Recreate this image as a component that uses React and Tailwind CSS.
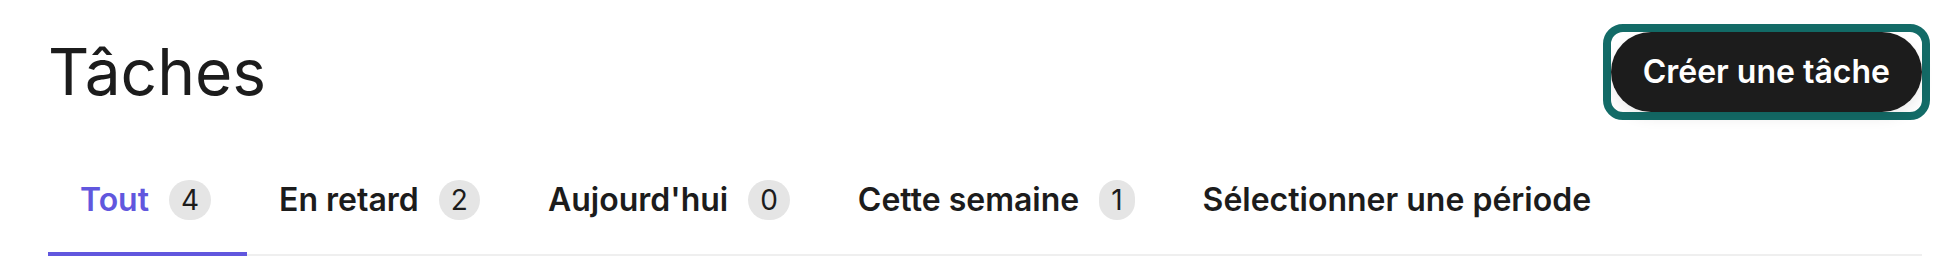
import { useState } from "react"

const tabs = [
  { label: "Tout", count: 4 },
  { label: "En retard", count: 2 },
  { label: "Aujourd'hui", count: 0 },
  { label: "Cette semaine", count: 1 },
  { label: "Sélectionner une période" },
]

export default function App() {
  const [active, setActive] = useState("Tout")

  return (
    <div
      className="min-h-[280px] bg-white pl-12 pr-[38px] pt-6 text-[#1c1c1c]"
      style={{ fontFamily: "Inter, 'Noto Sans', sans-serif" }}
    >
      <div className="flex items-center justify-between">
        <h1 className="text-[64px] font-normal leading-[96px]">Tâches</h1>
        <div className="-mr-2 rounded-[20px] border-8 border-[#136b67] bg-white">
          <button className="flex h-20 items-center rounded-full bg-[#1c1c1c] px-8 text-[32px] font-semibold text-white shadow-[0_6px_14px_rgba(0,0,0,0.08)]">
            Créer une tâche
          </button>
        </div>
      </div>

      <div className="mt-7 flex border-b-2 border-[#efefef]">
        {tabs.map((t) => {
          const isActive = t.label === active
          return (
            <button
              key={t.label}
              onClick={() => setActive(t.label)}
              className={`-mb-[2px] flex items-center gap-5 border-b-4 pt-7 pb-7 pl-8 pr-9 text-[32px] font-semibold leading-[48px] ${
                isActive ? "border-[#6157de] text-[#6157de]" : "border-transparent text-[#1c1c1c]"
              }`}
            >
              <span>{t.label}</span>
              {t.count !== undefined && (
                <span className="flex h-10 items-center rounded-full bg-[#e5e5e5] px-3 text-[28px] font-normal leading-none text-[#1c1c1c]">
                  {t.count}
                </span>
              )}
            </button>
          )
        })}
      </div>
    </div>
  )
}
